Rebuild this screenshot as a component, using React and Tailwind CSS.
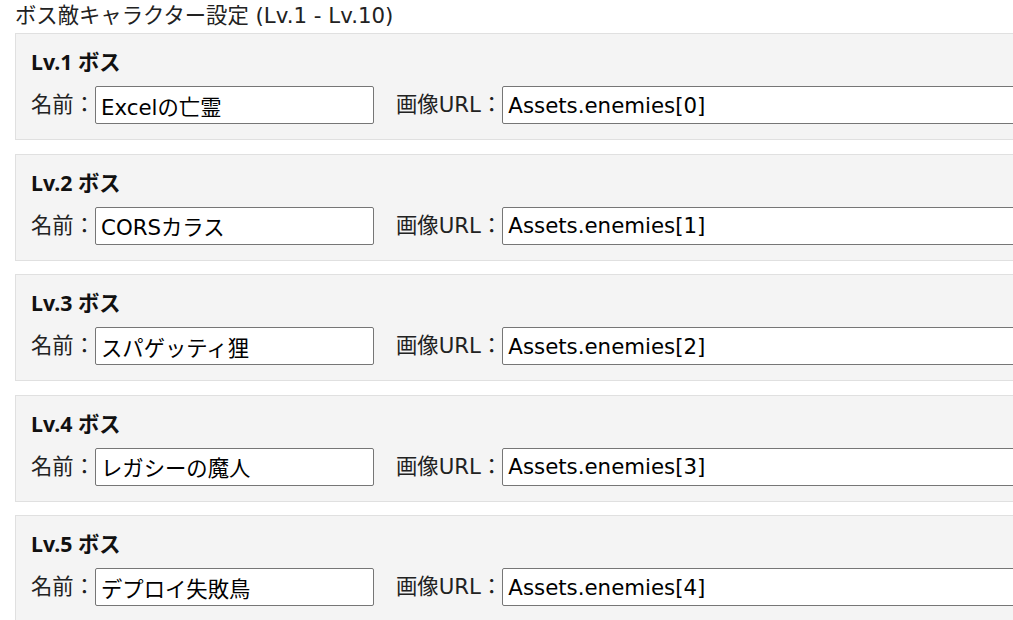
const bosses = [
  { level: 1, name: "Excelの亡霊", image: "Assets.enemies[0]" },
  { level: 2, name: "CORSカラス", image: "Assets.enemies[1]" },
  { level: 3, name: "スパゲッティ狸", image: "Assets.enemies[2]" },
  { level: 4, name: "レガシーの魔人", image: "Assets.enemies[3]" },
  { level: 5, name: "デプロイ失敗鳥", image: "Assets.enemies[4]" },
];

const BossCard = ({ boss }) => (
  <div className="mb-[13.5px] w-[1100px] border border-[#e0e0e0] bg-[#f4f4f4] p-[15px]">
    <h3 className="mb-[12px] font-['Noto_Sans','Noto_Sans_CJK_JP',sans-serif] text-[21.33px] font-bold leading-[25px] text-[#111]">
      Lv.{boss.level} ボス
    </h3>
    <div className="flex items-center text-[21.33px] text-[#222]">
      <label className="flex shrink-0 items-center">
        名前：
        <input
          className="h-[38px] w-[279px] shrink-0 rounded-[2px] border border-[#767676] bg-white px-[5px] text-black"
          defaultValue={boss.name}
        />
      </label>
      <label className="ml-[22px] flex shrink-0 items-center">
        画像URL：
        <input
          className="h-[38px] w-[600px] shrink-0 rounded-[2px] border border-[#767676] bg-white px-[5px] text-black"
          defaultValue={boss.image}
        />
      </label>
    </div>
  </div>
);

export default function App() {
  return (
    <div className="h-[620px] w-[1013px] overflow-hidden bg-white px-[15px] font-['DejaVu_Sans','Noto_Sans_CJK_JP',sans-serif]">
      <div className="h-[33px] text-[21.33px] leading-[32px] text-[#222]">
        ボス敵キャラクター設定 (Lv.1 - Lv.10)
      </div>
      {bosses.map((boss) => (
        <BossCard key={boss.level} boss={boss} />
      ))}
    </div>
  );
}
